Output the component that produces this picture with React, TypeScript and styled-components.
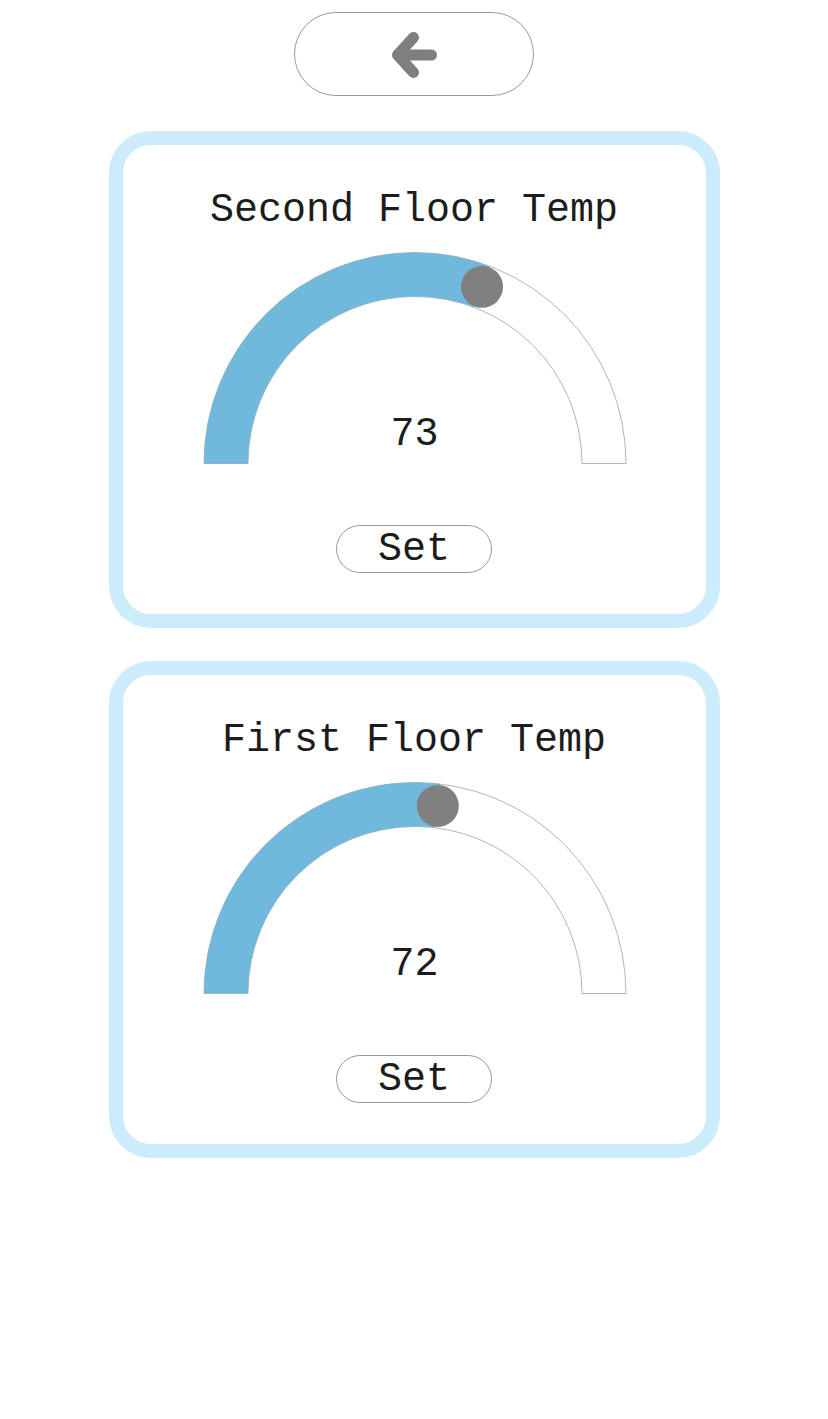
import React from "react";
import styled, { createGlobalStyle } from "styled-components";

const GlobalStyle = createGlobalStyle`
  html, body {
    margin: 0;
    padding: 0;
    background: #ffffff;
  }
  body {
    font-family: "Courier New", "Liberation Mono", monospace;
  }
`;

const Page = styled.div`
  display: flex;
  flex-direction: column;
  align-items: center;
  padding-top: 12px;
  padding-bottom: 40px;
`;

const BackButton = styled.button`
  width: 240px;
  height: 84px;
  border: 1px solid #9a9a9a;
  border-radius: 42px;
  background: #ffffff;
  display: flex;
  align-items: center;
  justify-content: center;
  padding: 0;
  margin: 0 0 35px 0;
  cursor: pointer;
`;

const Card = styled.section`
  box-sizing: border-box;
  width: 611px;
  border: 14px solid #ccecfc;
  border-radius: 42px;
  background: #ffffff;
  display: flex;
  flex-direction: column;
  align-items: center;
  padding: 42px 0 41px;
  & + & {
    margin-top: 33px;
  }
`;

const Title = styled.h2`
  margin: 0 0 16px;
  font-family: "Courier New", "Liberation Mono", monospace;
  font-weight: 400;
  font-size: 40px;
  line-height: 48px;
  color: #1c1c1c;
  white-space: pre;
`;

const GaugeStack = styled.div`
  display: grid;
  justify-items: center;
  margin-left: 1px;
`;

const GaugeSvg = styled.svg`
  grid-area: 1 / 1;
  display: block;
`;

const Value = styled.div`
  grid-area: 1 / 1;
  align-self: end;
  margin-bottom: 6px;
  font-family: "Courier New", "Liberation Mono", monospace;
  font-size: 40px;
  line-height: 48px;
  color: #1c1c1c;
`;

const SetButton = styled.button`
  margin-top: 60px;
  box-sizing: border-box;
  width: 156px;
  height: 48px;
  border: 1px solid #9a9a9a;
  border-radius: 24px;
  background: #ffffff;
  font-family: "Courier New", "Liberation Mono", monospace;
  font-size: 40px;
  line-height: 48px;
  color: #1c1c1c;
  padding: 0;
  cursor: pointer;
`;

const W = 424;
const H = 214;
const CX = 212;
const CY = 212.5;
const R_OUT = 211;
const R_IN = 167;
const R_MID = (R_OUT + R_IN) / 2;
const MIN = 65;
const MAX = 78;

const pt = (r: number, deg: number) => {
  const a = (deg * Math.PI) / 180;
  return [CX + r * Math.cos(a), CY - r * Math.sin(a)];
};

const sector = (fromDeg: number, toDeg: number) => {
  const [x1, y1] = pt(R_OUT, fromDeg);
  const [x2, y2] = pt(R_OUT, toDeg);
  const [x3, y3] = pt(R_IN, toDeg);
  const [x4, y4] = pt(R_IN, fromDeg);
  return `M ${x1} ${y1} A ${R_OUT} ${R_OUT} 0 0 1 ${x2} ${y2} L ${x3} ${y3} A ${R_IN} ${R_IN} 0 0 0 ${x4} ${y4} Z`;
};

const Gauge: React.FC<{ value: number }> = ({ value }) => {
  const frac = Math.min(1, Math.max(0, (value - MIN) / (MAX - MIN)));
  const angle = 180 - frac * 180;
  const [kx, ky] = pt(R_MID, angle);
  return (
    <GaugeStack>
      <GaugeSvg width={W} height={H} viewBox={`0 0 ${W} ${H}`}>
        <path d={sector(180, 0)} fill="#ffffff" stroke="#b5b5b5" strokeWidth={1} />
        <path d={sector(180, angle)} fill="#70b8dc" />
        <circle cx={kx} cy={ky} r={21} fill="#808080" />
      </GaugeSvg>
      <Value>{value}</Value>
    </GaugeStack>
  );
};

const ArrowIcon = () => (
  <svg width="60" height="60" viewBox="0 0 60 60" style={{ marginTop: 2 }}>
    <g
      fill="none"
      stroke="#7f7f7f"
      strokeWidth={11}
      strokeLinecap="round"
      strokeLinejoin="round"
    >
      <path d="M 16 30 H 47.5" />
      <path d="M 29.5 12.5 L 13.5 30 L 29.5 47.5" />
    </g>
  </svg>
);

const zones = [
  { name: "Second Floor Temp", value: 73 },
  { name: "First Floor Temp", value: 72 },
];

export default function App() {
  return (
    <>
      <GlobalStyle />
      <Page>
        <BackButton aria-label="Back">
          <ArrowIcon />
        </BackButton>
        {zones.map((z) => (
          <Card key={z.name}>
            <Title>{z.name}</Title>
            <Gauge value={z.value} />
            <SetButton>Set</SetButton>
          </Card>
        ))}
      </Page>
    </>
  );
}
